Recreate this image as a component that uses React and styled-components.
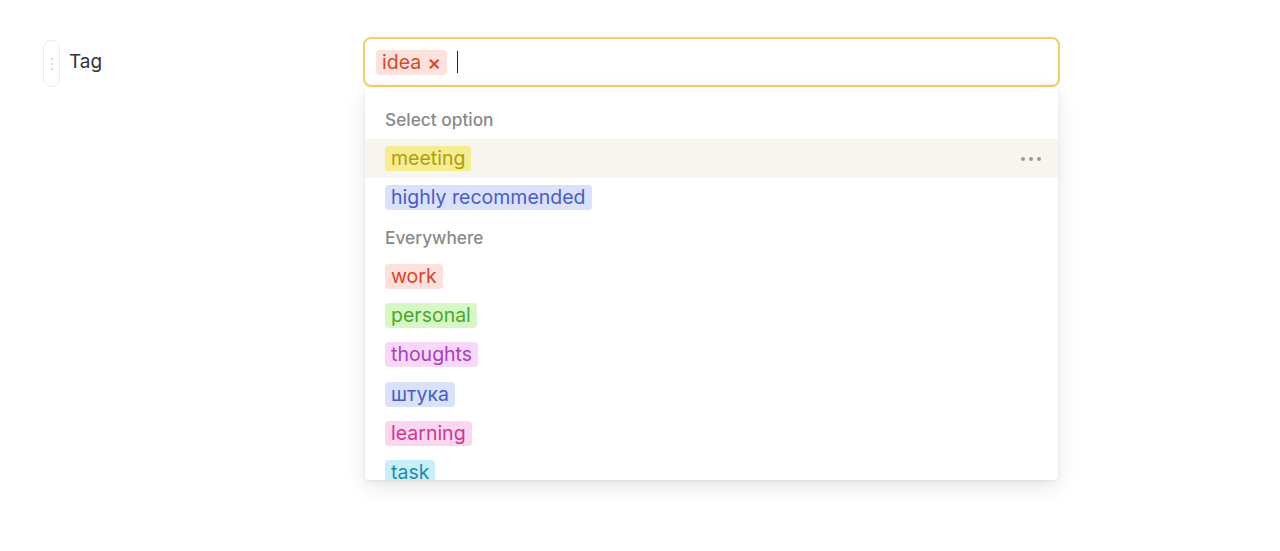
import React from "react";
import styled, { createGlobalStyle } from "styled-components";

const GlobalStyle = createGlobalStyle`
  body {
    margin: 0;
    background: #ffffff;
    font-family: Inter, "Noto Sans", sans-serif;
  }
`;

const Page = styled.div`
  display: flex;
  align-items: flex-start;
  padding: 37px 0 0 43px;
  height: 551px;
  box-sizing: border-box;
`;

const LabelCol = styled.div`
  display: flex;
  align-items: center;
  gap: 9px;
  width: 320px;
  padding-top: 3px;
`;

const Handle = styled.div`
  width: 15px;
  height: 45px;
  border: 1px solid #ececec;
  border-radius: 8px;
  display: flex;
  flex-direction: column;
  align-items: center;
  justify-content: center;
  gap: 3px;

  span {
    width: 2px;
    height: 2px;
    border-radius: 50%;
    background: #c8c8c8;
  }
`;

const Label = styled.div`
  font-size: 19px;
  color: #333;
  margin-top: -4px;
`;

const Field = styled.div`
  width: 697px;
  display: flex;
  flex-direction: column;
`;

const Input = styled.div`
  height: 50px;
  box-sizing: border-box;
  border: 2px solid #f2cd6a;
  border-radius: 8px;
  display: flex;
  align-items: center;
  padding: 0 11px;
  gap: 10px;
`;

const Chip = styled.span`
  display: inline-flex;
  align-items: center;
  gap: 6px;
  height: 25px;
  padding: 0 6px;
  border-radius: 4px;
  font-size: 19.5px;
  line-height: 25px;
  background: ${(p) => p.$bg};
  color: ${(p) => p.$fg};
`;

const Cross = styled.span`
  font-size: 21px;
  font-weight: 500;
  line-height: 1;
`;

const Caret = styled.span`
  width: 1px;
  height: 22px;
  background: #222;
`;

const Dropdown = styled.div`
  margin: 1px 2px 0;
  height: 392px;
  overflow: hidden;
  background: #fff;
  border-radius: 0 0 4px 4px;
  box-shadow: 0 6px 20px rgba(0, 0, 0, 0.11), 0 1px 3px rgba(0, 0, 0, 0.07);
  padding-top: 12px;
  box-sizing: border-box;
`;

const Header = styled.div`
  height: 39px;
  display: flex;
  align-items: center;
  padding-left: 20px;
  font-size: 17.3px;
  font-weight: 500;
  color: #8a8a8a;
`;

const Row = styled.div`
  height: 39.3px;
  display: flex;
  align-items: center;
  justify-content: space-between;
  padding: 0 17px 0 20px;
  background: ${(p) => (p.$active ? "#f7f6ee" : "transparent")};
`;

const Dots = styled.div`
  display: flex;
  gap: 4px;

  span {
    width: 4px;
    height: 4px;
    border-radius: 50%;
    background: #9a9a9a;
  }
`;

const sections = [
  {
    title: "Select option",
    items: [
      { text: "meeting", bg: "#f6ec91", fg: "#ad9e0e", active: true },
      { text: "highly recommended", bg: "#dae1fb", fg: "#4a5cc6" },
    ],
  },
  {
    title: "Everywhere",
    items: [
      { text: "work", bg: "#fde0db", fg: "#d2472a" },
      { text: "personal", bg: "#d6f7c6", fg: "#4aa826" },
      { text: "thoughts", bg: "#f7d8f9", fg: "#ab3fbf" },
      { text: "штука", bg: "#dae1fb", fg: "#4a5cc6" },
      { text: "learning", bg: "#fcd6ee", fg: "#c93b92" },
      { text: "task", bg: "#c8eefa", fg: "#1d8cab" },
    ],
  },
];

const App = () => {
  return (
    <>
      <GlobalStyle />
      <Page>
        <LabelCol>
          <Handle>
            <span />
            <span />
            <span />
          </Handle>
          <Label>Tag</Label>
        </LabelCol>
        <Field>
          <Input>
            <Chip $bg="#fde1dc" $fg="#d2492b">
              idea <Cross>×</Cross>
            </Chip>
            <Caret />
          </Input>
          <Dropdown>
            {sections.map((s) => (
              <React.Fragment key={s.title}>
                <Header>{s.title}</Header>
                {s.items.map((it) => (
                  <Row key={it.text} $active={it.active}>
                    <Chip $bg={it.bg} $fg={it.fg}>
                      {it.text}
                    </Chip>
                    {it.active && (
                      <Dots>
                        <span />
                        <span />
                        <span />
                      </Dots>
                    )}
                  </Row>
                ))}
              </React.Fragment>
            ))}
          </Dropdown>
        </Field>
      </Page>
    </>
  );
};

export default App;
